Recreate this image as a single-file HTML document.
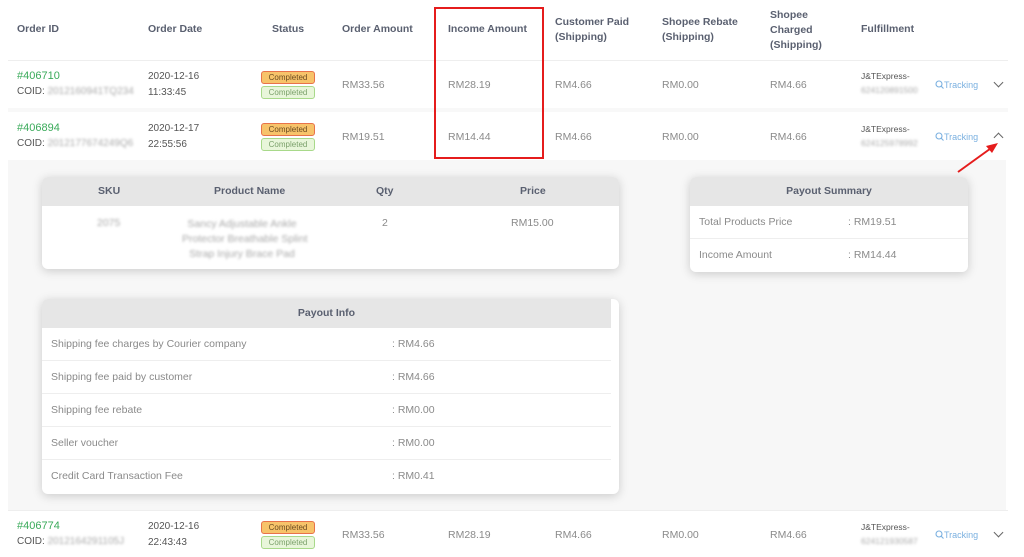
<!DOCTYPE html>
<html><head><style>
*{margin:0;padding:0;box-sizing:border-box}
body{width:1024px;height:557px;background:#fff;font-family:"Liberation Sans",sans-serif;font-size:10.5px;color:#8a8a8a;position:relative;overflow:hidden}
.a{position:absolute;white-space:nowrap}
.h{font-weight:bold;color:#5a6070;font-size:10.5px;line-height:15px}
.g{color:#3aaa5a;font-size:11px}
.d{color:#555;font-size:10px;line-height:16px}
.bl{filter:blur(1.3px);color:#aaa}
.b1{position:absolute;width:54px;height:13px;border:1px solid #e8734a;background:#f7c36a;border-radius:3px;font-size:8px;color:#6a4a20;text-align:center;line-height:11px}
.b2{position:absolute;width:54px;height:13px;border:1px solid #a8d98a;background:#e8f6da;border-radius:3px;font-size:8px;color:#7aa06a;text-align:center;line-height:11px}
.card{position:absolute;background:#fff;border-radius:6px;box-shadow:0 2px 10px rgba(0,0,0,.18);overflow:hidden}
.ch{background:#e6e6e6;height:29px;line-height:29px;font-weight:bold;color:#5a6070;text-align:center}
.row{height:33px;border-bottom:1px solid #eee;position:relative;line-height:33px;padding-left:9px;color:#8a8a8a}
.tr{color:#7ab0e0;font-size:9px}
.chev{position:absolute;width:7px;height:7px;border-right:1.3px solid #666;border-bottom:1.3px solid #666}
</style></head><body>
<div class="a h" style="left:17px;top:22px">Order ID</div>
<div class="a h" style="left:148px;top:22px">Order Date</div>
<div class="a h" style="left:272px;top:22px">Status</div>
<div class="a h" style="left:342px;top:22px">Order Amount</div>
<div class="a h" style="left:448px;top:22px">Income Amount</div>
<div class="a h" style="left:555px;top:15px">Customer Paid<br>(Shipping)</div>
<div class="a h" style="left:662px;top:15px">Shopee Rebate<br>(Shipping)</div>
<div class="a h" style="left:770px;top:8px">Shopee<br>Charged<br>(Shipping)</div>
<div class="a h" style="left:861px;top:22px">Fulfillment</div>
<div class="a" style="left:8px;top:60px;width:1000px;border-top:1px solid #eee"></div>
<div class="a" style="left:8px;top:108px;width:1000px;height:4px;background:#f8f8f8"></div>
<div class="a" style="left:8px;top:160px;width:998px;height:350px;background:#f7f7f7"></div>
<div class="a" style="left:8px;top:510px;width:1000px;border-top:1px solid #eee"></div>

<div class="a g" style="left:17px;top:70px">#406710</div>
<div class="a d" style="left:17px;top:84px">COID: <span class="bl">2012160941TQ234</span></div>
<div class="a d" style="left:148px;top:69px">2020-12-16<br>11:33:45</div>
<div class="b1" style="left:261px;top:71px">Completed</div>
<div class="b2" style="left:261px;top:86px">Completed</div>
<div class="a" style="left:342px;top:79px">RM33.56</div>
<div class="a" style="left:448px;top:79px">RM28.19</div>
<div class="a" style="left:555px;top:79px">RM4.66</div>
<div class="a" style="left:662px;top:79px">RM0.00</div>
<div class="a" style="left:770px;top:79px">RM4.66</div>
<div class="a" style="left:861px;top:71px;font-size:8.5px;color:#555">J&amp;TExpress-</div>
<div class="a bl" style="left:861px;top:85px;font-size:8.5px">624120891500</div>
<div class="a tr" style="left:935px;top:80px"><svg width="9" height="9" style="vertical-align:-1px"><circle cx="4" cy="4" r="3" fill="none" stroke="#7ab0e0" stroke-width="1.1"/><line x1="6" y1="6" x2="8.5" y2="8.5" stroke="#7ab0e0" stroke-width="1.1"/></svg>Tracking</div>
<div class="chev" style="left:995px;top:79px;transform:rotate(45deg)"></div>

<div class="a g" style="left:17px;top:122px">#406894</div>
<div class="a d" style="left:17px;top:136px">COID: <span class="bl">2012177674249Q6</span></div>
<div class="a d" style="left:148px;top:121px">2020-12-17<br>22:55:56</div>
<div class="b1" style="left:261px;top:123px">Completed</div>
<div class="b2" style="left:261px;top:138px">Completed</div>
<div class="a" style="left:342px;top:131px">RM19.51</div>
<div class="a" style="left:448px;top:131px">RM14.44</div>
<div class="a" style="left:555px;top:131px">RM4.66</div>
<div class="a" style="left:662px;top:131px">RM0.00</div>
<div class="a" style="left:770px;top:131px">RM4.66</div>
<div class="a" style="left:861px;top:124px;font-size:8.5px;color:#555">J&amp;TExpress-</div>
<div class="a bl" style="left:861px;top:138px;font-size:8.5px">624125978992</div>
<div class="a tr" style="left:935px;top:132px"><svg width="9" height="9" style="vertical-align:-1px"><circle cx="4" cy="4" r="3" fill="none" stroke="#7ab0e0" stroke-width="1.1"/><line x1="6" y1="6" x2="8.5" y2="8.5" stroke="#7ab0e0" stroke-width="1.1"/></svg>Tracking</div>
<div class="chev" style="left:995px;top:134px;transform:rotate(-135deg)"></div>

<div class="a" style="left:434px;top:7px;width:110px;height:152px;border:2px solid #e51c1c"></div>
<svg class="a" style="left:950px;top:138px" width="55" height="40"><line x1="8" y1="34" x2="44" y2="8" stroke="#e51c1c" stroke-width="2"/><polygon points="48,5 36,8 42,15" fill="#e51c1c"/></svg>

<div class="card" style="left:42px;top:177px;width:577px;height:92px">
<div class="ch" style="text-align:left;position:relative">
<span class="a" style="left:56px">SKU</span><span class="a" style="left:172px">Product Name</span><span class="a" style="left:334px">Qty</span><span class="a" style="left:478px">Price</span></div>
<div class="a bl" style="left:55px;top:40px">2075</div>
<div class="a bl" style="left:140px;top:40px;text-align:center;line-height:15px;width:120px">Sancy Adjustable Ankle<br>Protector Breathable Splint<br>Strap Injury Brace Pad</div>
<div class="a" style="left:340px;top:40px">2</div>
<div class="a" style="left:469px;top:40px">RM15.00</div>
</div>

<div class="card" style="left:690px;top:177px;width:278px;height:95px">
<div class="ch">Payout Summary</div>
<div class="row">Total Products Price<span class="a" style="left:158px">: RM19.51</span></div>
<div class="row" style="border:none">Income Amount<span class="a" style="left:158px">: RM14.44</span></div>
</div>

<div class="card" style="left:42px;top:299px;width:577px;height:195px">
<div class="ch" style="width:569px">Payout Info</div>
<div class="row" style="width:569px">Shipping fee charges by Courier company<span class="a" style="left:350px">: RM4.66</span></div>
<div class="row" style="width:569px">Shipping fee paid by customer<span class="a" style="left:350px">: RM4.66</span></div>
<div class="row" style="width:569px">Shipping fee rebate<span class="a" style="left:350px">: RM0.00</span></div>
<div class="row" style="width:569px">Seller voucher<span class="a" style="left:350px">: RM0.00</span></div>
<div class="row" style="width:569px;border:none">Credit Card Transaction Fee<span class="a" style="left:350px">: RM0.41</span></div>
</div>

<div class="a g" style="left:17px;top:520px">#406774</div>
<div class="a d" style="left:17px;top:534px">COID: <span class="bl">2012164291105J</span></div>
<div class="a d" style="left:148px;top:519px">2020-12-16<br>22:43:43</div>
<div class="b1" style="left:261px;top:521px">Completed</div>
<div class="b2" style="left:261px;top:536px">Completed</div>
<div class="a" style="left:342px;top:529px">RM33.56</div>
<div class="a" style="left:448px;top:529px">RM28.19</div>
<div class="a" style="left:555px;top:529px">RM4.66</div>
<div class="a" style="left:662px;top:529px">RM0.00</div>
<div class="a" style="left:770px;top:529px">RM4.66</div>
<div class="a" style="left:861px;top:522px;font-size:8.5px;color:#555">J&amp;TExpress-</div>
<div class="a bl" style="left:861px;top:536px;font-size:8.5px">624121930587</div>
<div class="a tr" style="left:935px;top:530px"><svg width="9" height="9" style="vertical-align:-1px"><circle cx="4" cy="4" r="3" fill="none" stroke="#7ab0e0" stroke-width="1.1"/><line x1="6" y1="6" x2="8.5" y2="8.5" stroke="#7ab0e0" stroke-width="1.1"/></svg>Tracking</div>
<div class="chev" style="left:995px;top:529px;transform:rotate(45deg)"></div>
</body></html>
